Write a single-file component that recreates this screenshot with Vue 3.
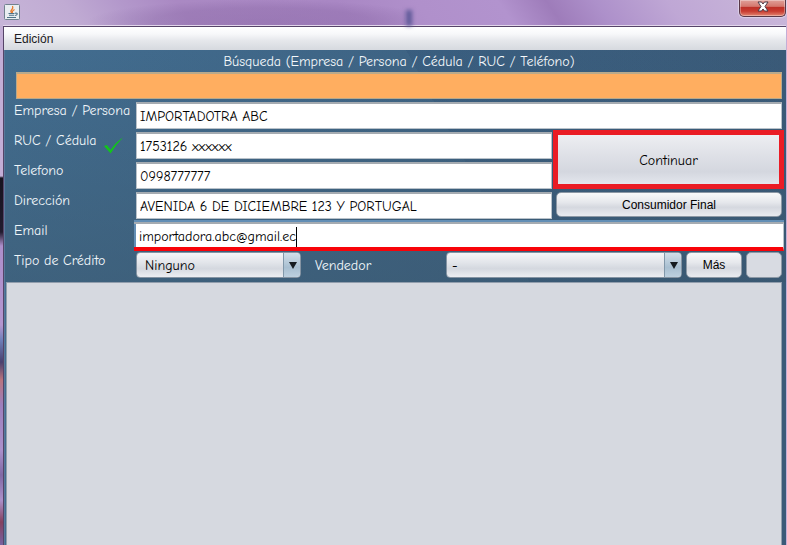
<script setup>
import { ref } from 'vue'

const busqueda = ref('')
const empresa = ref('IMPORTADOTRA ABC')
const ruc = ref('1753126 xxxxxx')
const telefono = ref('0998777777')
const direccion = ref('AVENIDA 6 DE DICIEMBRE 123 Y PORTUGAL')
const email = ref('importadora.abc@gmail.ec')
</script>

<template>
  <div class="window">
    <header class="titlebar">
      <svg class="java" viewBox="0 0 16 16" aria-hidden="true">
        <rect x=".5" y=".5" width="15" height="15" rx="1" fill="#e9eef1" stroke="#71828f" />
        <path d="M8 9C4.500 6.500 10.500 5.500 8.500 2M8.500 9C7.500 7.500 9 6.500 10.500 5.500" fill="none" stroke="#e8792b" stroke-width="1.300" />
        <path d="M4.500 9.500H10.500M5 11.300H10M3 13.500H12M11 9.300C14.500 8.500 13.500 11.500 10.800 11.500" fill="none" stroke="#4f7387" stroke-width="1.100" />
      </svg>
      <span class="shade"></span>
      <button class="close" type="button" aria-label="Cerrar">
        <svg viewBox="0 0 12 11" aria-hidden="true">
          <path d="M1 1H4.500L6 3L7.500 1H11L8 5.500L11 10H7.500L6 8L4.500 10H1L4 5.500Z" fill="#fff" stroke="#4b3b48" stroke-width="1" />
        </svg>
      </button>
    </header>
    <div class="frame">
      <nav class="menubar"><button type="button">Edición</button></nav>
      <main class="content">
        <label class="heading" for="busqueda">Búsqueda (Empresa / Persona / Cédula / RUC / Teléfono)</label>
        <input id="busqueda" v-model="busqueda" class="field search" type="text" />
        <form class="form" @submit.prevent>
          <label for="empresa">Empresa / Persona</label>
          <input id="empresa" v-model="empresa" class="field wide" type="text" />

          <label for="ruc">RUC / Cédula
            <svg class="check" viewBox="0 0 20 18" aria-hidden="true">
              <path d="M0 9L3 8L7 13Q12 5 20 0Q12 8 7 17Z" fill="#12c41c" />
            </svg>
          </label>
          <input id="ruc" v-model="ruc" class="field" type="text" />
          <button class="continue" type="submit">Continuar</button>

          <label for="telefono">Telefono</label>
          <input id="telefono" v-model="telefono" class="field" type="text" />

          <label for="direccion">Dirección</label>
          <input id="direccion" v-model="direccion" class="field" type="text" />
          <button class="soft" type="button">Consumidor Final</button>

          <label for="email">Email</label>
          <div class="field wide active">
            <input id="email" v-model="email" type="text" />
          </div>

          <label for="credito">Tipo de Crédito</label>
          <div class="options wide">
            <div class="combo credit">
              <select id="credito"><option>Ninguno</option></select>
            </div>
            <label class="seller" for="vendedor">Vendedor</label>
            <div class="combo grow">
              <select id="vendedor" class="tight"><option>-</option></select>
            </div>
            <button class="soft more" type="button">Más</button>
            <button class="soft blank" type="button" aria-label="Opciones" disabled></button>
          </div>
        </form>
        <section class="panel"></section>
      </main>
    </div>
  </div>
</template>

<style>
html,
body,
#app {
  height: 100%;
  margin: 0;
}
</style>

<style scoped>
.window {
  --hand: "Comic Sans MS", "Comic Neue", "Open Sans", sans-serif;
  --ui: "Liberation Sans", Arial, sans-serif;
  box-sizing: border-box;
  min-height: 100%;
  display: flex;
  flex-direction: column;
  padding: 0 0 0 3px;
  font: 14px/20px var(--hand);
  background:
    linear-gradient(#c3aed6 0, #c3aed6 176px, #17131f 178px, #211b2e 232px, #ad8fcb 246px, #b496cf 325px, #6f7fb9 340px, #49406f 362px, #b9747f 380px, #9d7fbd 405px, #ac91cb 450px, #8069a5 475px, #ad91ca 500px, #84415f 522px, #7762a1 100%) left / 3px 100% no-repeat,
    #c3aed6;
}
.window * {
  box-sizing: border-box;
}
button,
input,
select {
  margin: 0;
  font: inherit;
  color: #000;
}
.titlebar {
  height: 26px;
  display: flex;
  align-items: flex-start;
  margin-left: -3px;
  padding-left: 4px;
  background:
    radial-gradient(ellipse at 55% 85%, #79579650 0, #79579640 45%, transparent 72%) 90px 0 / 315px 100% no-repeat,
    linear-gradient(55deg, #c7b5d8 0, #c0abd3 10%, #b398cb 17%, #aa89c3 24%, #a987c4 44%, #b090cb 54%, #b293ce 64%, #9e7cba 70%, #ad90ca 76%, #bfa7d5 85%, #cab8da 100%);
}
.java {
  width: 16px;
  height: 16px;
  margin-top: 4px;
}
.shade {
  width: 6px;
  height: 16px;
  margin: 10px auto 0 386px;
  background: #5d5897;
  filter: blur(2px);
}
.close {
  width: 47px;
  height: 17px;
  margin-right: 1px;
  padding: 0 0 3px;
  display: flex;
  justify-content: center;
  align-items: center;
  border: 1px solid #593747;
  border-top: 0;
  border-radius: 0 0 5px 5px;
  background: linear-gradient(#e0a099 0, #d4776d 40%, #bd3027 45%, #c83b30 70%, #e38672 100%);
  box-shadow: inset 0 0 0 1px #ffffff55, 0 0 1px 1px #ffffff66;
}
.close svg {
  width: 12px;
  height: 11px;
}
.frame {
  flex: 1;
  display: flex;
  flex-direction: column;
  margin-right: 1px;
  border: 1px solid #564468;
  border-width: 1px 0 0 1px;
  box-shadow: 0 -1px #e2d6eb;
}
.menubar {
  height: 23px;
  padding-left: 10px;
  display: flex;
  background: linear-gradient(#fff 0, #f7f8fa 30%, #e5e7eb 60%, #d6d9df 100%);
}
.menubar button {
  border: 0;
  padding: 0;
  background: none;
  color: #1b1b22;
  font: 12px/24px var(--ui);
}
.content {
  flex: 1;
  display: flex;
  flex-direction: column;
  padding: 0 4px 0 1px;
  border-left: 1px solid #58799a;
  background:
    linear-gradient(180deg, transparent 0, #3b586e88 100%) 0 0 / 100% 232px no-repeat,
    linear-gradient(62deg, transparent 58%, #27476d33 58%, #27476d18 78%, transparent 100%) 0 0 / 100% 232px no-repeat,
    linear-gradient(90deg, #426d90 0, #3f6687 40%, #3a5a78 100%);
  background-color: #3d5d78;
}
.heading {
  height: 22px;
  padding-left: 10px;
  text-align: center;
  line-height: 24px;
  color: #f4f8fb;
}
.field {
  height: 27px;
  min-width: 0;
  width: 100%;
  padding: 0 3px;
  border: 1px solid #b9c2ca;
  border-top: 2px solid #a5abb1;
  border-radius: 0;
  outline: 0;
  background: #fff;
}
.search {
  width: auto;
  margin-left: 10px;
  background: #ffae60;
  border-color: #b9a98b;
}
.form {
  display: grid;
  grid-template-columns: 118px minmax(0, 416fr) minmax(0, 226fr);
  grid-auto-rows: 27px;
  gap: 3px 4px;
  padding: 3px 0 3px 8px;
}
.form label {
  display: flex;
  color: #f1f6fa;
  line-height: 18px;
  white-space: nowrap;
}
.wide {
  grid-column: 2 / 4;
}
.check {
  width: 19px;
  height: 18px;
  margin: 5px 0 0 7px;
}
.continue {
  grid-column: 3;
  grid-row: 2 / 4;
  margin: -2px -2px 0 -3px;
  padding-top: 4px;
  border: 5px solid #ea1c25;
  background: linear-gradient(#edeef2 0, #dfe1e7 40%, #d4d7df 75%, #e3e6ed 100%);
}
.soft {
  padding: 0;
  border: 1px solid #8c98a5;
  border-radius: 5px;
  background: linear-gradient(#f8f9fa 0, #e6e8ec 40%, #d5d8df 62%, #e9ebf0 100%);
  font: 12px/20px var(--ui);
}
.form > .soft {
  height: 25px;
}
.active {
  display: flex;
  margin: 0 -2px;
  padding: 3px 5px 0;
  width: auto;
  border-left: 0;
  border-bottom: 4px solid #f80309;
  background: linear-gradient(90deg, #628eb5 2px, #fff 2px);
  box-shadow: 0 -2px #628eb5;
  height: 29px;
}
.active input {
  field-sizing: content;
  height: 20px;
  min-width: 1px;
  padding: 0;
  border: 0;
  border-right: 1px solid #000;
  outline: 0;
  background: none;
}
.options {
  display: flex;
  gap: 4px;
}
.combo {
  position: relative;
  display: flex;
  height: 26px;
}
.combo::before {
  content: "";
  position: absolute;
  inset: 1px 1px 1px auto;
  width: 16px;
  border-left: 1px solid #8298aa;
  border-radius: 0 4px 4px 0;
  background: linear-gradient(#d2dfe9, #a8bfd1 60%, #bdd0df);
  pointer-events: none;
}
.combo::after {
  content: "";
  position: absolute;
  top: 10px;
  right: 4px;
  border: 4px solid transparent;
  border-top: 7px solid #151b20;
  border-bottom: 0;
  pointer-events: none;
}
.combo select {
  width: 100%;
  padding: 1px 20px 0 8px;
  appearance: none;
  border: 1px solid #8594a3;
  border-radius: 4px;
  background: linear-gradient(#f5f6f8 0, #e2e5ea 40%, #d4d8df 65%, #eceef2 100%);
}
.combo .tight {
  padding-left: 5px;
}
.credit {
  width: 165px;
}
.grow {
  flex: 1;
}
.options .seller {
  width: 137px;
  padding-left: 10px;
  line-height: 28px;
}
.more {
  width: 56px;
  height: 26px;
}
.blank {
  width: 36px;
  height: 26px;
  background: #d8dbe2;
}
.panel {
  flex: 1;
  border: 1px solid #929ead;
  border-bottom: 0;
  background: #d6d9e0;
}
</style>
